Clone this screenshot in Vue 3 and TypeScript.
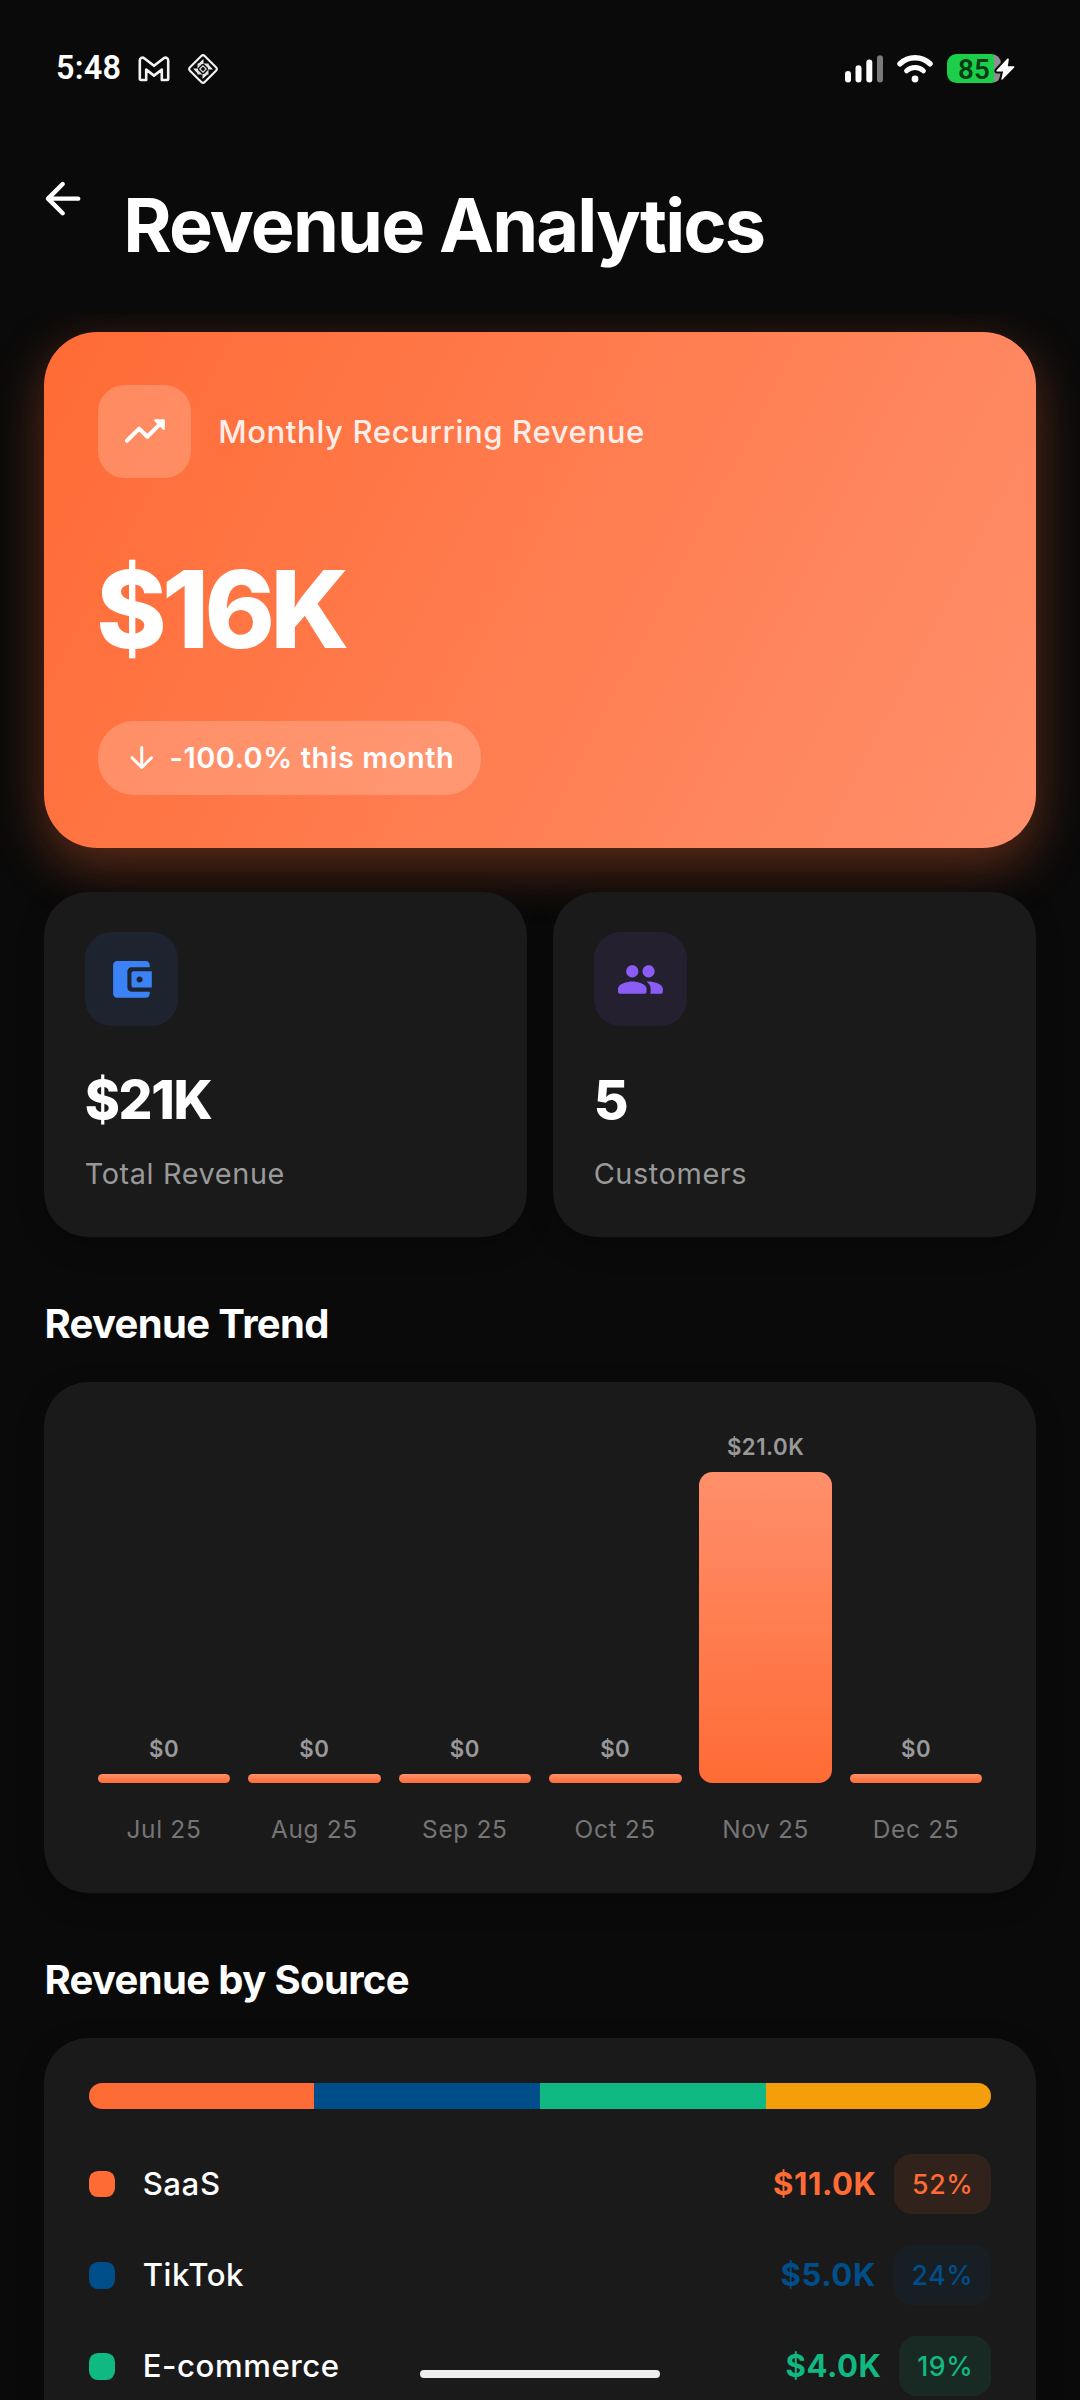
<script setup lang="ts">
interface Stat {
  value: string
  label: string
  color: string
  icon: string
}
interface Month {
  label: string
  amount: string
  height: number
}
interface Source {
  name: string
  amount: string
  share: string
  color: string
}

const stats: Stat[] = [
  {
    value: '$21K',
    label: 'Total Revenue',
    color: '#3b82f6',
    icon: 'M10 16V8c0-1.1.89-2 2-2h9V5c0-1.1-.9-2-2-2H5c-1.11 0-2 .9-2 2v14c0 1.1.89 2 2 2h14c1.1 0 2-.9 2-2v-1h-9c-1.11 0-2-.9-2-2zm3-8c-.55 0-1 .45-1 1v6c0 .55.45 1 1 1h9V8h-9zm3 5.5c-.83 0-1.5-.67-1.5-1.5s.67-1.5 1.5-1.5 1.5.67 1.5 1.5-.67 1.5-1.5 1.5z',
  },
  {
    value: '5',
    label: 'Customers',
    color: '#8b5cf6',
    icon: 'M16 11c1.66 0 2.99-1.34 2.99-3S17.66 5 16 5s-3 1.34-3 3 1.34 3 3 3zm-8 0c1.66 0 2.99-1.34 2.99-3S9.66 5 8 5 5 6.34 5 8s1.34 3 3 3zm0 2c-2.33 0-7 1.17-7 3.5V18c0 .55.45 1 1 1h12c.55 0 1-.45 1-1v-1.5c0-2.33-4.67-3.5-7-3.5zm8 0c-.29 0-.62.02-.97.05.02.01.03.03.04.04 1.14.83 1.93 1.94 1.93 3.41V18c0 .35-.07.69-.18 1H22c.55 0 1-.45 1-1v-1.5c0-2.33-4.67-3.5-7-3.5z',
  },
]

const months: Month[] = [
  { label: 'Jul 25', amount: '$0', height: 8.9 },
  { label: 'Aug 25', amount: '$0', height: 8.9 },
  { label: 'Sep 25', amount: '$0', height: 8.9 },
  { label: 'Oct 25', amount: '$0', height: 8.9 },
  { label: 'Nov 25', amount: '$21.0K', height: 311.1 },
  { label: 'Dec 25', amount: '$0', height: 8.9 },
]

const segments: string[] = ['#ff6b35', '#004e89', '#10b981', '#f59e0b']

const sources: Source[] = [
  { name: 'SaaS', amount: '$11.0K', share: '52%', color: '#ff6b35' },
  { name: 'TikTok', amount: '$5.0K', share: '24%', color: '#004e89' },
  { name: 'E-commerce', amount: '$4.0K', share: '19%', color: '#10b981' },
]
</script>

<template>
  <div class="screen">
    <header class="status">
      <div class="status-left">
        <span class="time">5:48</span>
        <svg class="mail" width="32" height="26" viewBox="0 0 32 26">
          <path
            d="M1.8 22.8V4.4c0-2.4 2.6-3.6 4.4-2.2L16 9.8l9.8-7.6c1.8-1.4 4.4-.2 4.4 2.2v18.4c0 .8-.4 1.2-1.2 1.2h-5.2V13.6L16 19.6l-7.8-6V24H3c-.8 0-1.2-.4-1.2-1.2z"
            fill="none" stroke="#f4f4f4" stroke-width="2.6" stroke-linejoin="round"
          />
        </svg>
        <svg class="diamond" width="32" height="32" viewBox="0 0 32 32">
          <rect x="5.6" y="5.6" width="20.8" height="20.8" rx="2.4" transform="rotate(45 16 16)" fill="none" stroke="#f4f4f4" stroke-width="2.1" />
          <path d="M16.5 6v5H11zM26 16.500h-5V11zM15.500 26v-5H21zM6 15.500h5V21z" fill="#ececec" />
          <path d="M10.500 10.500h5l-5 5zM21.500 10.500v5l-5-5zM21.500 21.500h-5l5-5zM10.500 21.500v-5l5 5z" fill="#dcdcdc" />
          <path d="M16 12.800l3.200 3.200-3.200 3.200-3.200-3.200z" fill="none" stroke="#dcdcdc" stroke-width="1.200" />
        </svg>
      </div>
      <div class="status-right">
        <svg width="38" height="28" viewBox="0 0 38 28">
          <g fill="#fff">
            <rect x="0" y="16" width="6" height="11.5" rx="3" />
            <rect x="10.5" y="10.3" width="6" height="17.2" rx="3" />
            <rect x="21.3" y="4.6" width="6" height="22.9" rx="3" />
            <rect x="32" y="0.3" width="6" height="27.2" rx="3" fill="#7a7a7a" />
          </g>
        </svg>
        <svg class="wifi" width="36" height="28" viewBox="0 0 36 28">
          <path d="M3 8.8a21.5 21.5 0 0 1 30 0" fill="none" stroke="#fff" stroke-width="5.4" stroke-linecap="round" />
          <path d="M9.6 15.8a12.2 12.2 0 0 1 16.8 0" fill="none" stroke="#fff" stroke-width="5" stroke-linecap="round" />
          <circle cx="18" cy="24" r="3.4" fill="#fff" />
        </svg>
        <div class="battery">
          <span class="level">85</span>
          <svg class="bolt" width="24" height="28" viewBox="0 0 24 28">
            <path
              d="M13.2 3.8L2.6 15.2c-.5.6-.2 1.3.6 1.3h5.9l-1.7 7.3c-.2.9.5 1.2 1.1.6l11.7-11.8c.5-.6.2-1.3-.6-1.3h-5.8l1-6.8c.1-1-.9-1.4-1.6-.7z"
              fill="#fff" stroke="#0a0a0a" stroke-width="4" paint-order="stroke" stroke-linejoin="round"
            />
          </svg>
        </div>
      </div>
    </header>

    <div class="appbar">
      <svg class="back" width="53.3" height="53.3" viewBox="0 0 24 24" fill="#fff">
        <path d="M19 11H7.83l4.88-4.88c.39-.39.39-1.03 0-1.42-.39-.39-1.02-.39-1.41 0l-6.59 6.59c-.39.39-.39 1.02 0 1.41l6.59 6.59c.39.39 1.02.39 1.41 0 .39-.39.39-1.02 0-1.41L7.83 13H19c.55 0 1-.45 1-1s-.45-1-1-1z" />
      </svg>
      <h1>Revenue Analytics</h1>
    </div>

    <main>
      <section class="hero">
        <div class="hero-head">
          <div class="tile hero-tile">
            <svg viewBox="0 0 24 24" fill="#fff">
              <path d="M16.85 6.85l1.44 1.44-4.88 4.88-3.29-3.29c-.39-.39-1.02-.39-1.41 0l-6 6.01c-.39.39-.39 1.02 0 1.41.39.39 1.02.39 1.41 0L9.41 12l3.29 3.29c.39.39 1.02.39 1.41 0l5.59-5.58 1.44 1.44c.31.31.85.09.85-.35V6.5c.01-.28-.21-.5-.49-.5h-4.29c-.45 0-.67.54-.36.85z" />
            </svg>
          </div>
          <span class="hero-label">Monthly Recurring Revenue</span>
        </div>
        <div class="hero-value">$16K</div>
        <div class="chip">
          <svg width="35.5" height="35.5" viewBox="0 0 24 24" fill="#fff">
            <path d="M11 5v11.17l-4.88-4.88c-.39-.39-1.03-.39-1.42 0-.39.39-.39 1.02 0 1.41l6.59 6.59c.39.39 1.02.39 1.41 0l6.59-6.59c.39-.39.39-1.02 0-1.41-.39-.39-1.02-.39-1.41 0L13 16.17V5c0-.55-.45-1-1-1s-1 .45-1 1z" />
          </svg>
          <span>-100.0% this month</span>
        </div>
      </section>

      <div class="stats">
        <section v-for="s in stats" :key="s.label" class="card stat">
          <div class="tile" :style="{ backgroundColor: s.color + '1a' }">
            <svg viewBox="0 0 24 24" :fill="s.color"><path :d="s.icon" /></svg>
          </div>
          <div class="stat-value">{{ s.value }}</div>
          <div class="stat-label">{{ s.label }}</div>
        </section>
      </div>

      <h2>Revenue Trend</h2>
      <section class="card chart">
        <div v-for="m in months" :key="m.label" class="col">
          <span class="amount">{{ m.amount }}</span>
          <div class="bar" :style="{ height: m.height + 'px' }"></div>
          <span class="month">{{ m.label }}</span>
        </div>
      </section>

      <h2>Revenue by Source</h2>
      <section class="card sources">
        <div class="split">
          <div v-for="c in segments" :key="c" class="segment" :style="{ backgroundColor: c }"></div>
        </div>
        <div v-for="s in sources" :key="s.name" class="row">
          <span class="dot" :style="{ backgroundColor: s.color }"></span>
          <span class="name">{{ s.name }}</span>
          <span class="sum" :style="{ color: s.color }">{{ s.amount }}</span>
          <span class="pill" :style="{ color: s.color, backgroundColor: s.color + '1a' }">{{ s.share }}</span>
        </div>
      </section>
    </main>

    <div class="home-indicator"></div>
  </div>
</template>

<style>
body {
  background: #0a0a0a;
}
</style>

<style scoped>
.screen {
  position: relative;
  display: flex;
  flex-direction: column;
  width: 1080px;
  height: 2400px;
  overflow: hidden;
  background: #0a0a0a;
  color: #fff;
  font-family: Inter, "Noto Sans", sans-serif;
}
svg {
  display: block;
  flex: none;
}
.status {
  display: flex;
  justify-content: space-between;
  align-items: center;
  height: 137px;
  padding: 0 64px 0 56px;
  box-sizing: border-box;
  flex: none;
}
.status-left,
.status-right {
  display: flex;
  align-items: center;
}
.time {
  width: 82px;
  margin-bottom: 2px;
  font: 600 32.4px/38px Roboto, sans-serif;
  letter-spacing: 0.2px;
}
.diamond {
  margin-left: 17px;
  margin-top: 1px;
}
.wifi {
  margin-left: 14px;
}
.battery {
  position: relative;
  display: flex;
  align-items: center;
  width: 54px;
  height: 29px;
  margin: 0 15px 0 14px;
  border-radius: 9.5px;
  background: linear-gradient(90deg, #1bcf4b 47px, #8e8e93 47px);
}
.level {
  padding: 1px 0 0 11px;
  font: 600 27.8px/29px Roboto, sans-serif;
  color: #083a16;
}
.bolt {
  position: absolute;
  left: 47px;
  top: 1px;
}
.appbar {
  display: flex;
  height: 177px;
  padding-left: 36px;
  box-sizing: border-box;
  flex: none;
}
.back {
  margin-top: 35px;
}
h1 {
  margin: 44.4px 0 0 34px;
  height: 90px;
  font-size: 73.8px;
  line-height: 90px;
  font-weight: 700;
  letter-spacing: -1.85px;
}
main {
  flex: 1;
  min-height: 0;
  overflow: hidden;
  padding: 17.8px 44.4px 0;
}
.hero {
  display: flex;
  flex-direction: column;
  align-items: flex-start;
  height: 516px;
  padding: 53.3px;
  box-sizing: border-box;
  border-radius: 53.3px;
  background: linear-gradient(117.5deg, #ff6b35, #ff8f6b);
  box-shadow: 0 17.8px 52px rgba(255, 107, 53, 0.35);
}
.hero-head {
  display: flex;
  align-items: center;
}
.tile {
  display: flex;
  align-items: center;
  justify-content: center;
  width: 93.3px;
  height: 93.3px;
  border-radius: 26.7px;
}
.tile svg {
  width: 48.9px;
  height: 48.9px;
}
.hero-tile {
  background: rgba(255, 255, 255, 0.2);
}
.hero-label {
  margin-left: 27.2px;
  font-size: 31.11px;
  line-height: 40px;
  font-weight: 500;
  letter-spacing: 0.6px;
  color: rgba(255, 255, 255, 0.9);
}
.hero-value {
  margin: 72.5px 0 53.2px -1.4px;
  font-size: 106.67px;
  line-height: 117px;
  font-weight: 800;
  letter-spacing: -4.6px;
}
.chip {
  display: flex;
  align-items: center;
  gap: 9.5px;
  height: 73.7px;
  padding: 0 26.7px;
  box-sizing: border-box;
  border-radius: 35.6px;
  background: rgba(255, 255, 255, 0.2);
  font-size: 28.89px;
  line-height: 36px;
  font-weight: 600;
  letter-spacing: 0.58px;
  white-space: nowrap;
}
.stats {
  display: flex;
  gap: 26.7px;
  margin-top: 44.4px;
}
.card {
  border-radius: 44.4px;
  box-sizing: border-box;
  background: #1a1a1a;
  box-shadow: 0 8.9px 28px rgba(0, 0, 0, 0.22);
}
.stat {
  flex: 1;
  height: 344.9px;
  padding: 40.3px;
}
.stat-value {
  margin-top: 41.6px;
  font-size: 53.33px;
  line-height: 65px;
  font-weight: 800;
  letter-spacing: -1.3px;
}
.stat-label {
  margin-top: 24px;
  font-size: 28.89px;
  line-height: 35px;
  letter-spacing: 0.6px;
  color: #999;
}
h2 {
  margin: 62.5px 0 34.3px;
  font-size: 40px;
  line-height: 48px;
  font-weight: 700;
  letter-spacing: -0.64px;
}
.chart {
  display: flex;
  align-items: flex-end;
  gap: 17.8px;
  height: 511.6px;
  padding: 0 53.3px 49.3px;
}
.col {
  flex: 1;
  display: flex;
  flex-direction: column;
  align-items: center;
}
.amount {
  font-size: 22.22px;
  line-height: 27px;
  font-weight: 600;
  letter-spacing: 0.5px;
  color: #999;
}
.bar {
  width: 100%;
  margin: 12px 0 31.5px;
  border-radius: 13.3px;
  background: linear-gradient(#ff8f6b, #ff6b35);
}
.month {
  font-size: 24.44px;
  line-height: 30px;
  letter-spacing: 0.67px;
  color: #757575;
}
.sources {
  padding: 44.4px 44.4px 0;
  height: 500px;
}
.split {
  display: flex;
  height: 26.7px;
  margin-bottom: 44.7px;
  border-radius: 13.3px;
  overflow: hidden;
}
.segment {
  flex: 1;
}
.row {
  display: flex;
  align-items: center;
  height: 60px;
  margin-bottom: 31.2px;
  font-size: 31.11px;
}
.dot {
  width: 26.7px;
  height: 26.7px;
  border-radius: 8.9px;
}
.name {
  flex: 1;
  margin-left: 27.2px;
  font-weight: 500;
  letter-spacing: 0.6px;
}
.sum {
  font-weight: 700;
  letter-spacing: 0.58px;
}
.pill {
  margin-left: 17.8px;
  padding: 0 17.8px;
  border-radius: 17.8px;
  font-size: 26.67px;
  line-height: 60px;
  font-weight: 500;
  letter-spacing: 0.65px;
}
.home-indicator {
  position: absolute;
  left: 420px;
  top: 2370px;
  width: 240px;
  height: 8px;
  border-radius: 4px;
  background: #ededed;
}
</style>
